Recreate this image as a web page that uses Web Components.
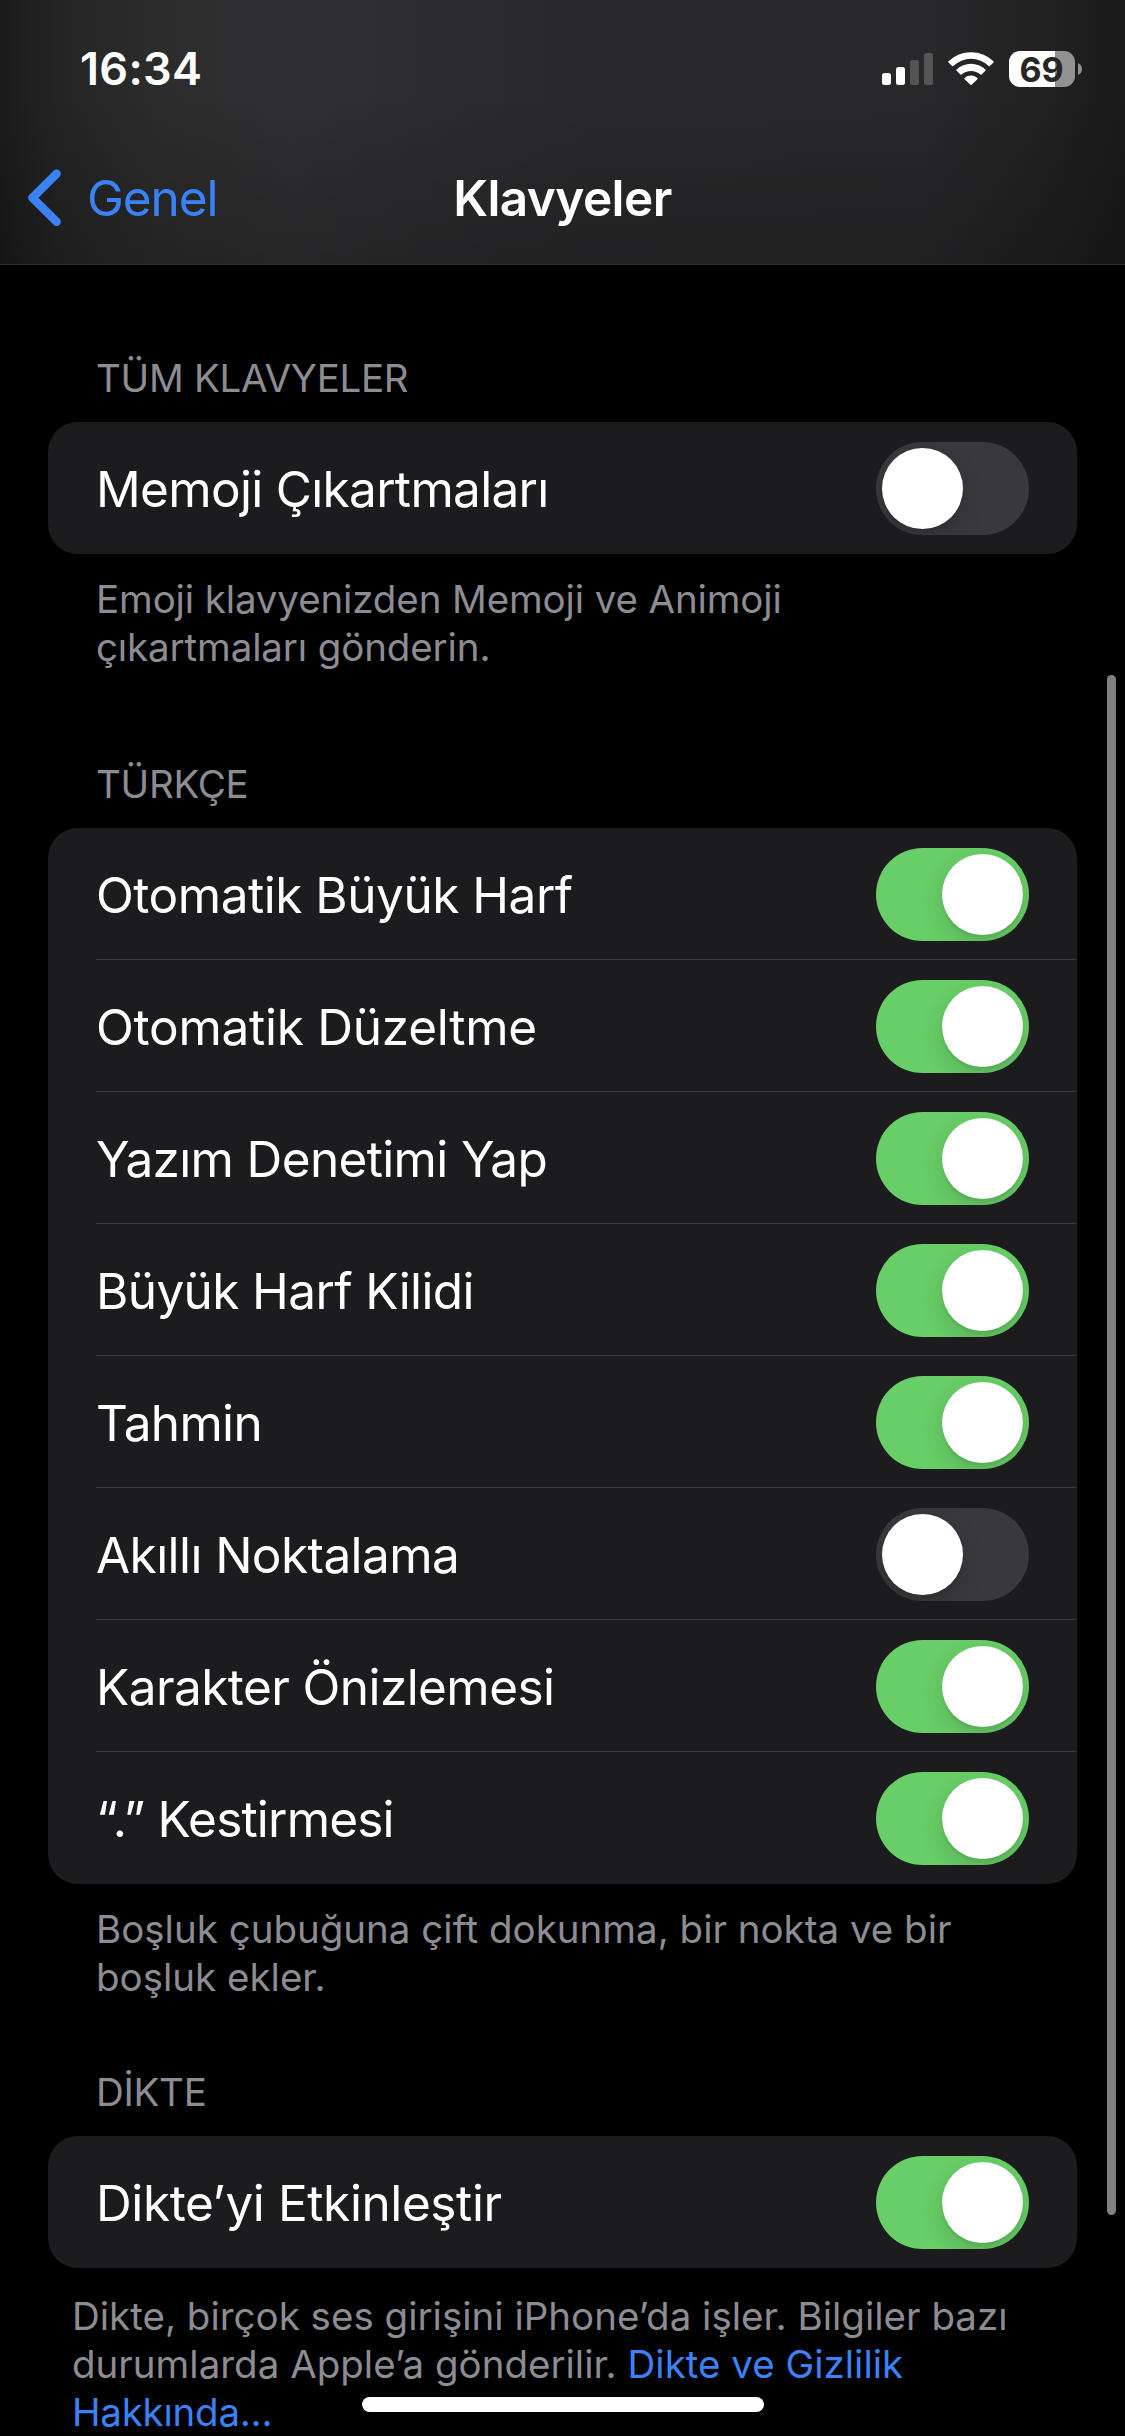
<!DOCTYPE html>
<html lang="tr">
<head>
<meta charset="UTF-8">
<title>Klavyeler</title>
<style>
  body {
    margin: 0;
    background: #000;
    color: #fff;
    font-family: Inter, "Liberation Sans", sans-serif;
  }
</style>
</head>
<body>
<settings-screen>
  <status-bar slot="top" time="16:34" battery="69"></status-bar>
  <nav-bar slot="top" back="Genel">Klavyeler</nav-bar>

  <settings-group>
    <span slot="header">TÜM KLAVYELER</span>
    <settings-row tracking="-.68">Memoji Çıkartmaları</settings-row>
    <span slot="footer" style="letter-spacing: -.12px">Emoji klavyenizden Memoji ve Animoji<br>çıkartmaları gönderin.</span>
  </settings-group>

  <settings-group>
    <span slot="header">TÜRKÇE</span>
    <settings-row on tracking="-.48">Otomatik Büyük Harf</settings-row>
    <settings-row on tracking="-.26">Otomatik Düzeltme</settings-row>
    <settings-row on tracking="-.65">Yazım Denetimi Yap</settings-row>
    <settings-row on tracking="-.62">Büyük Harf Kilidi</settings-row>
    <settings-row on tracking="-.67">Tahmin</settings-row>
    <settings-row tracking="-.58">Akıllı Noktalama</settings-row>
    <settings-row on tracking="-.58">Karakter Önizlemesi</settings-row>
    <settings-row on tracking="-.8">“.” Kestirmesi</settings-row>
    <span slot="footer">Boşluk çubuğuna çift dokunma, bir nokta ve bir<br>boşluk ekler.</span>
  </settings-group>

  <settings-group class="dictation">
    <span slot="header">DİKTE</span>
    <settings-row on tracking="-.4">Dikte’yi Etkinleştir</settings-row>
    <span slot="footer">Dikte, birçok ses girişini iPhone’da işler. Bilgiler bazı<br>durumlarda Apple’a gönderilir. <text-link>Dikte ve Gizlilik<br><span style="letter-spacing: -.25px">Hakkında...</span></text-link></span>
  </settings-group>
</settings-screen>

<script>
// Helper: attaches an open shadow root with the given markup
function render(el, html) {
  el.attachShadow({ mode: 'open' }).innerHTML = html;
}

// Whole screen: translucent header, scrolled list, overlays
class SettingsScreen extends HTMLElement {
  connectedCallback() {
    render(this, `
      <style>
        :host {
          display: flex;
          flex-direction: column;
          position: relative;
          width: 1125px;
          height: 2436px;
          overflow: hidden;
          background: #000;
        }

        header {
          display: flex;
          flex-direction: column;
          box-sizing: border-box;
          height: 265px;
          border-bottom: 1px solid #2b2b2c;
          background:
            linear-gradient(rgba(0, 0, 0, 0) 35%, rgba(0, 0, 0, .2)),
            linear-gradient(90deg, #1b1b1b 0, #242424 5%, #2c2c2d 14%, #2f2f31 26%, #29292b 52%, #28282a 82%, #212122 93%, #1a1a1a 100%);
        }

        main {
          display: flex;
          flex-direction: column;
          padding: 0 48px;
        }

        .scrollbar {
          position: absolute;
          top: 675px;
          right: 9px;
          width: 9px;
          height: 1540px;
          border-radius: 5px;
          background: #808080;
        }

        .home {
          position: absolute;
          top: 2397px;
          left: 362px;
          width: 402px;
          height: 15px;
          border-radius: 8px;
          background: #fff;
        }
      </style>

      <header><slot name="top"></slot></header>
      <main><slot></slot></main>
      <div class="scrollbar"></div>
      <div class="home"></div>
    `);
  }
}

class StatusBar extends HTMLElement {
  connectedCallback() {
    render(this, `
      <style>
        :host {
          display: flex;
          justify-content: space-between;
          align-items: center;
          height: 138px;
          padding: 0 43px 0 80px;
        }

        .time {
          font-size: 45px;
          font-weight: 600;
          line-height: 54px;
          letter-spacing: .3px;
        }

        .icons {
          display: flex;
          align-items: center;
          gap: 15px;
        }

        svg {
          display: block;
        }

        .battery {
          display: flex;
          align-items: center;
          gap: 3px;
        }

        .level {
          display: flex;
          align-items: center;
          justify-content: center;
          box-sizing: border-box;
          width: 66px;
          height: 36px;
          padding-right: 1px;
          border-radius: 11px;
          background: linear-gradient(90deg, #fff 46px, #929293 46px);
          color: #262627;
          font-size: 34px;
          font-weight: 700;
        }
      </style>

      <span class="time">${this.getAttribute('time')}</span>
      <div class="icons">
        <svg width="51" height="36" viewBox="0 0 51 36" fill="#fff">
          <rect x="0" y="22" width="9" height="12" rx="2.5"/>
          <rect x="14" y="16" width="9" height="18" rx="2.5"/>
          <rect x="28" y="9" width="9" height="25" rx="2.5" fill="#545455"/>
          <rect x="42" y="2" width="9" height="32" rx="2.5" fill="#545455"/>
        </svg>
        <svg width="46" height="36" viewBox="0 0 46 36" fill="#fff">
          <path d="M0.5 10.2 A32.5 32.5 0 0 1 45.5 10.2 Q46 10.8 45.5 11.4 L41.9 15 Q41.3 15.5 40.7 15 A25.5 25.5 0 0 0 5.3 15 Q4.7 15.5 4.1 15 L0.5 11.4 Q0 10.8 0.5 10.2Z"/>
          <path d="M8.6 18.6 A20.8 20.8 0 0 1 37.4 18.6 Q38 19.2 37.4 19.8 L33.6 23.6 Q33 24.1 32.4 23.6 A14 14 0 0 0 13.6 23.6 Q13 24.1 12.4 23.6 L8.6 19.8 Q8 19.2 8.6 18.6Z"/>
          <path d="M16.6 27 A9.8 9.8 0 0 1 29.4 27 Q30 27.6 29.4 28.2 L23.6 33.8 Q23 34.4 22.4 33.8 L16.6 28.2 Q16 27.6 16.6 27Z"/>
        </svg>
        <div class="battery">
          <div class="level">${this.getAttribute('battery')}</div>
          <svg width="4" height="12" viewBox="0 0 4 12"><path d="M0 0 Q4 2 4 6 T0 12Z" fill="#929293"/></svg>
        </div>
      </div>
    `);
  }
}

class NavBar extends HTMLElement {
  connectedCallback() {
    render(this, `
      <style>
        :host {
          display: grid;
          grid-template-columns: 1fr auto 1fr;
          align-items: center;
          height: 120px;
          padding: 0 28px;
          font-size: 49.5px;
          line-height: 60px;
        }

        .back {
          display: flex;
          align-items: center;
          gap: 25px;
          color: #3b82f7;
          letter-spacing: -1.1px;
        }

        .title {
          font-weight: 600;
          letter-spacing: -.6px;
        }
      </style>

      <div class="back">
        <svg width="34" height="58" viewBox="0 0 34 58" fill="none" stroke="#3b82f7"
          stroke-width="8.5" stroke-linecap="round" stroke-linejoin="round">
          <path d="M28.6 4.7 L4.4 28.7 L28.6 52.7"/>
        </svg>
        <span>${this.getAttribute('back')}</span>
      </div>
      <div class="title"><slot></slot></div>
    `);
  }
}

// Titled card with a note under it
class SettingsGroup extends HTMLElement {
  connectedCallback() {
    render(this, `
      <style>
        :host {
          display: flex;
          flex-direction: column;
          padding-top: 89px;
        }

        :host(.dictation) {
          --note-indent: 24px;
          --note-top: 24px;
          padding-top: 67px;
        }

        .header, .footer {
          color: #8d8c93;
          font-size: 38.5px;
          line-height: 48px;
          white-space: nowrap;
        }

        .header {
          padding: 0 48px 20px;
          letter-spacing: -.3px;
        }

        .card {
          display: flex;
          flex-direction: column;
          border-radius: 30px;
          background: #1c1c1e;
          overflow: hidden;
        }

        .footer {
          padding: var(--note-top, 21px) 0 0 var(--note-indent, 48px);
        }
      </style>

      <div class="header"><slot name="header"></slot></div>
      <div class="card"><slot></slot></div>
      <div class="footer"><slot name="footer"></slot></div>
    `);
  }
}

class SettingsRow extends HTMLElement {
  connectedCallback() {
    render(this, `
      <style>
        :host {
          display: flex;
          padding-left: 48px;
        }

        .row {
          flex: 1;
          display: flex;
          align-items: center;
          justify-content: space-between;
          box-sizing: border-box;
          height: 132px;
          padding: 1px 48px 0 0;
          border-bottom: 1px solid #3b3b3d;
        }

        :host(:last-of-type) .row {
          padding-bottom: 1px;
          border-bottom: none;
        }

        .label {
          padding-top: 1px;
          font-size: 49.5px;
          line-height: 60px;
          letter-spacing: ${this.getAttribute('tracking') || 0}px;
          white-space: nowrap;
        }
      </style>

      <div class="row">
        <span class="label"><slot></slot></span>
        <toggle-switch ${this.hasAttribute('on') ? 'on' : ''}></toggle-switch>
      </div>
    `);
  }
}

class ToggleSwitch extends HTMLElement {
  connectedCallback() {
    render(this, `
      <style>
        :host {
          display: flex;
          box-sizing: border-box;
          width: 153px;
          height: 93px;
          padding: 6px;
          border-radius: 47px;
          background: #39393d;
          overflow: hidden;
        }

        :host([on]) {
          justify-content: flex-end;
          background: #68ce67;
        }

        .knob {
          width: 81px;
          height: 81px;
          border-radius: 50%;
          background: #fff;
          box-shadow: 0 9px 24px rgba(0, 0, 0, .15), 0 3px 3px rgba(0, 0, 0, .06);
        }
      </style>

      <div class="knob"></div>
    `);
  }
}

class TextLink extends HTMLElement {
  connectedCallback() {
    render(this, `
      <style>
        :host {
          display: inline;
          color: #3b82f7;
        }
      </style>
      <slot></slot>
    `);
  }
}

customElements.define('settings-screen', SettingsScreen);
customElements.define('status-bar', StatusBar);
customElements.define('nav-bar', NavBar);
customElements.define('settings-group', SettingsGroup);
customElements.define('settings-row', SettingsRow);
customElements.define('toggle-switch', ToggleSwitch);
customElements.define('text-link', TextLink);
</script>
</body>
</html>
